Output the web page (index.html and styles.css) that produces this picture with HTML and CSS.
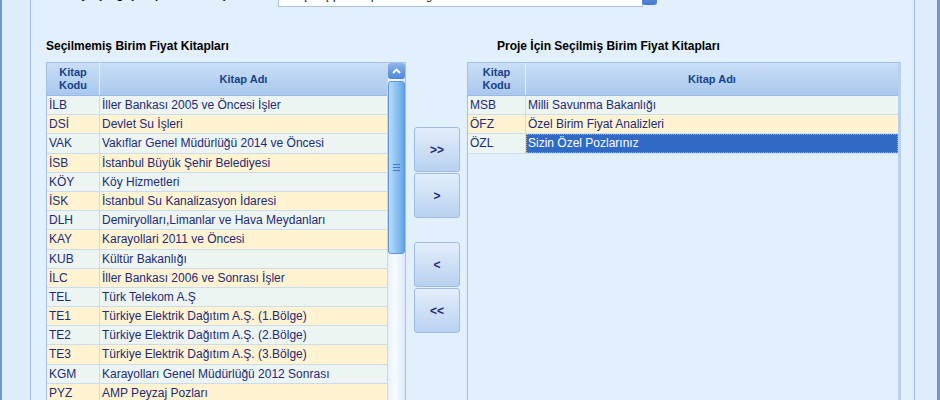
FILE: index.html
```html
<!DOCTYPE html>
<html>
	<head>
		<meta charset="utf-8">
		<title>Birim Fiyat Kitapları</title>
		<link rel="stylesheet" href="styles.css">
	</head>
	<body>
		<div class="window">
			<div class="group">
				<div class="toprow">
					<span class="toplabel">Proje için geçerli poz kitabı seçimi :</span>
					<div class="combo">
						<span class="combotext">Seçilmiş poz kitapları listesi gösterilir</span>
						<span class="combobtn"></span>
					</div>
				</div>

				<div class="lists">
					<div class="leftpanel">
						<div class="caption">Seçilmemiş Birim Fiyat Kitapları</div>
						<div class="grid left">
							<div class="gridbody">
								<div class="head">
									<div class="c1">Kitap<br>Kodu</div>
									<div class="c2">Kitap Adı</div>
								</div>
								<div class="row odd"><div class="c1">İLB</div><div class="c2">İller Bankası 2005 ve Öncesi İşler</div></div>
								<div class="row even"><div class="c1">DSİ</div><div class="c2">Devlet Su İşleri</div></div>
								<div class="row odd"><div class="c1">VAK</div><div class="c2">Vakıflar Genel Müdürlüğü 2014 ve Öncesi</div></div>
								<div class="row even"><div class="c1">İSB</div><div class="c2">İstanbul Büyük Şehir Belediyesi</div></div>
								<div class="row odd"><div class="c1">KÖY</div><div class="c2">Köy Hizmetleri</div></div>
								<div class="row even"><div class="c1">İSK</div><div class="c2">İstanbul Su Kanalizasyon İdaresi</div></div>
								<div class="row odd"><div class="c1">DLH</div><div class="c2">Demiryolları,Limanlar ve Hava Meydanları</div></div>
								<div class="row even"><div class="c1">KAY</div><div class="c2">Karayollari 2011 ve Öncesi</div></div>
								<div class="row odd"><div class="c1">KUB</div><div class="c2">Kültür Bakanlığı</div></div>
								<div class="row even"><div class="c1">İLC</div><div class="c2">İller Bankası 2006 ve Sonrası İşler</div></div>
								<div class="row odd"><div class="c1">TEL</div><div class="c2">Türk Telekom A.Ş</div></div>
								<div class="row even"><div class="c1">TE1</div><div class="c2">Türkiye Elektrik Dağıtım A.Ş. (1.Bölge)</div></div>
								<div class="row odd"><div class="c1">TE2</div><div class="c2">Türkiye Elektrik Dağıtım A.Ş. (2.Bölge)</div></div>
								<div class="row even"><div class="c1">TE3</div><div class="c2">Türkiye Elektrik Dağıtım A.Ş. (3.Bölge)</div></div>
								<div class="row odd"><div class="c1">KGM</div><div class="c2">Karayolları Genel Müdürlüğü 2012 Sonrası</div></div>
								<div class="row even"><div class="c1">PYZ</div><div class="c2">AMP Peyzaj Pozları</div></div>
							</div>
							<div class="scrollbar">
								<div class="sbup">
									<svg width="9" height="6" viewBox="0 0 9 6"><path d="M1 5 L4.5 1.5 L8 5" fill="none" stroke="#fff" stroke-width="1.8"/></svg>
								</div>
								<div class="sbthumb"><span class="grip"></span></div>
								<div class="sbtrack"></div>
							</div>
						</div>
					</div>

					<div class="buttons">
						<button class="mv">&gt;&gt;</button>
						<button class="mv">&gt;</button>
						<button class="mv gap">&lt;</button>
						<button class="mv">&lt;&lt;</button>
					</div>

					<div class="rightpanel">
						<div class="caption indent">Proje İçin Seçilmiş Birim Fiyat Kitapları</div>
						<div class="grid right">
							<div class="gridbody">
								<div class="head">
									<div class="c1 wide">Kitap<br>Kodu</div>
									<div class="c2">Kitap Adı</div>
								</div>
								<div class="row odd"><div class="c1 wide">MSB</div><div class="c2">Milli Savunma Bakanlığı</div></div>
								<div class="row even"><div class="c1 wide">ÖFZ</div><div class="c2">Özel Birim Fiyat Analizleri</div></div>
								<div class="row odd"><div class="c1 wide">ÖZL</div><div class="c2 selected">Sizin Özel Pozlarınız</div></div>
							</div>
						</div>
					</div>
				</div>
			</div>
		</div>
	</body>
</html>
```

FILE: styles.css
```css
body{
	margin: 0;
	background-color: #dfecfb;
	font-family: "Liberation Sans", Arial, sans-serif;
	font-size: 12px;
	color: #222a78;
	overflow: hidden;
}

.window{
	width: 935px;
	height: 400px;
	border-left: 2px solid #6b97d3;
	border-right: 3px solid #6b97d3;
	background-color: #dfecfb;
}

.group{
	margin-left: 28px;
	width: 883px;
	height: 400px;
	border-left: 1px solid #9dbde8;
	border-right: 1px solid #9dbde8;
	background-color: #e2effc;
}

/* top row, only its lower edge shows */
.toprow{
	display: flex;
	height: 6px;
	overflow: visible;
}

.toplabel{
	margin-left: 33px;
	margin-top: -11px;
	width: 214px;
	font-size: 11px;
	font-weight: bold;
	color: #000;
	white-space: nowrap;
	overflow: hidden;
}

.combo{
	margin-top: -13px;
	width: 363px;
	height: 18px;
	display: flex;
	background: #fff;
	border: 1px solid #a9c3e4;
}

.combotext{
	flex: 1;
	padding: 2px 0 0 10px;
	font-size: 11px;
	color: #000;
	white-space: nowrap;
	overflow: hidden;
}

.combobtn{
	width: 15px;
	height: 16px;
	margin-top: 1px;
	margin-right: -15px;
	border-radius: 3px;
	background: linear-gradient(#7aa7e4, #4478cc);
}

.lists{
	display: flex;
	margin-left: 15px;
	margin-top: 33px;
}

.caption{
	font-weight: bold;
	color: #000;
	height: 23px;
	line-height: 15px;
	white-space: nowrap;
}

.caption.indent{
	padding-left: 30px;
}

.leftpanel{
	width: 360px;
}

.rightpanel{
	width: 434px;
	margin-left: 7px;
}

.grid{
	display: flex;
	height: 345px;
	border: 1px solid #a3c0e8;
	box-sizing: border-box;
}

.grid.right{
	border-right: 3px solid #b9d0ee;
}

.gridbody{
	flex: 1;
	overflow: hidden;
}

.head{
	display: flex;
	height: 33px;
	font-size: 11px;
	font-weight: bold;
	color: #15428b;
	background: linear-gradient(#cadef6, #a9c8ee);
	border-bottom: 1px solid #9bbbe6;
	box-sizing: border-box;
	text-align: center;
	line-height: 13px;
}

.head .c1{
	padding-top: 3px;
	padding-left: 0;
	border-right: 1px solid #e8f1fc;
}

.head .c2{
	padding-top: 10px;
	padding-left: 0;
}

.row{
	display: flex;
	height: 19.2px;
	line-height: 18px;
	border-bottom: 1px solid #cbdcf1;
	box-sizing: border-box;
	white-space: nowrap;
}

.row.odd{
	background-color: #edf5f3;
}

.row.even{
	background-color: #fff3d2;
}

.c1{
	width: 53px;
	flex: none;
	padding-left: 2px;
	box-sizing: border-box;
	border-right: 1px solid #cbdcf1;
}

.c1.wide{
	width: 58px;
}

.c2{
	flex: 1;
	padding-left: 2px;
	overflow: hidden;
}

.c2.selected{
	background-color: #316ac5;
	color: #fff;
	outline: 1px dotted #c9a46a;
	outline-offset: -1px;
}

.scrollbar{
	width: 17px;
	flex: none;
	display: flex;
	flex-direction: column;
	background: linear-gradient(90deg, #e9f2fd, #f7fbff 40%, #dbe9fa);
	border-left: 1px solid #c5d8f0;
}

.sbup{
	height: 16px;
	border-radius: 3px;
	background: linear-gradient(#8db6ec, #4f86d6);
	display: flex;
	align-items: center;
	justify-content: center;
}

.sbthumb{
	margin-top: 2px;
	height: 171px;
	border-radius: 3px;
	border: 1px solid #5e95dc;
	background: linear-gradient(90deg, #b9dcfa, #8cc2f3 50%, #68a4e6);
	display: flex;
	align-items: center;
	justify-content: center;
}

.grip{
	width: 7px;
	height: 5px;
	border-top: 1px solid #4a7cc4;
	border-bottom: 1px solid #4a7cc4;
	position: relative;
}

.grip:after{
	content: "";
	position: absolute;
	left: 0;
	right: 0;
	top: 2px;
	border-top: 1px solid #4a7cc4;
}

.sbtrack{
	flex: 1;
}

.buttons{
	width: 46px;
	margin-left: 8px;
	padding-top: 88px;
	display: flex;
	flex-direction: column;
	gap: 1px;
}

button.mv{
	width: 46px;
	height: 45px;
	border: 1px solid #a0bce4;
	border-radius: 3px;
	background: linear-gradient(#e3eefb, #b9d1f0);
	font-family: "Liberation Sans", Arial, sans-serif;
	font-size: 12px;
	font-weight: bold;
	color: #222a78;
	padding: 0;
}

button.gap{
	margin-top: 23px;
}
```
